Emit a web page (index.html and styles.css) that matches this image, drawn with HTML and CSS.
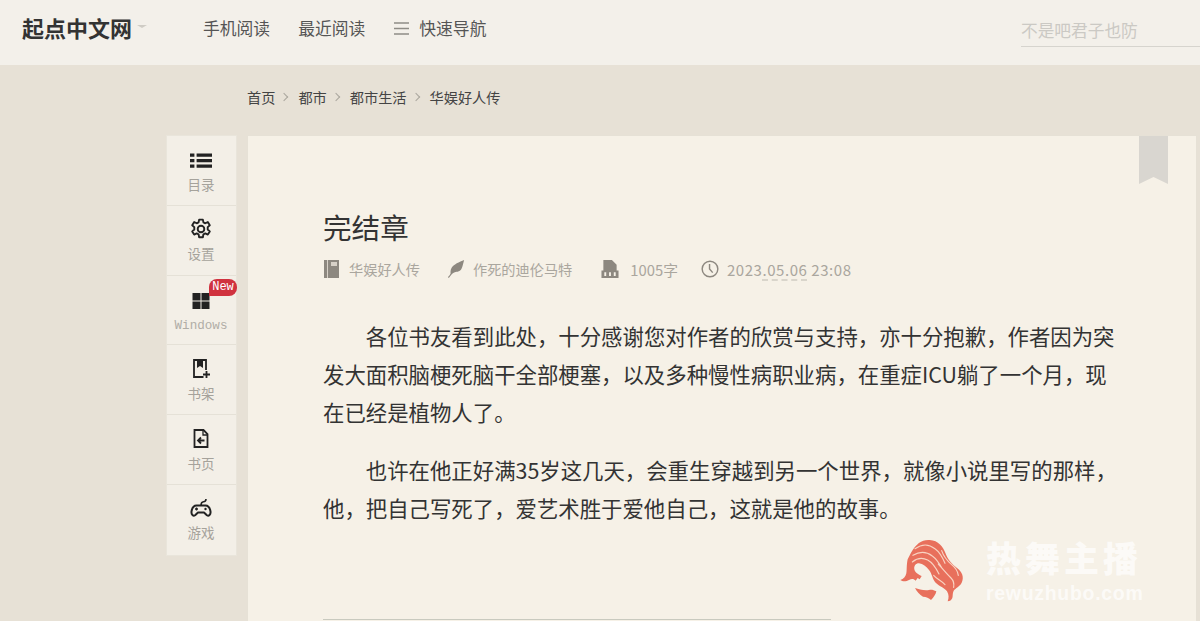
FILE: index.html
```html
<!DOCTYPE html>
<html lang="zh-CN">
<head>
  <meta charset="UTF-8">
  <title>完结章 - 华娱好人传</title>
  <link rel="stylesheet" href="styles.css">
</head>
<body>
  <header class="topbar">
    <a class="logo">起点中文网</a>
    <span class="logo-caret"></span>
    <nav class="topnav">
      <a>手机阅读</a>
      <a>最近阅读</a>
      <a class="nav-guide">
        <svg class="nav-icon" viewBox="0 0 15 13"><path d="M0 1h15M0 6.500h15M0 12h15" stroke="#8e8c86" stroke-width="1.500" fill="none"/></svg>
        快速导航
      </a>
    </nav>
    <div class="search">不是吧君子也防</div>
  </header>

  <div class="crumbs">
    <a>首页</a><span class="sep"></span>
    <a>都市</a><span class="sep"></span>
    <a>都市生活</a><span class="sep"></span>
    <a>华娱好人传</a>
  </div>

  <main class="reader">
    <ul class="sidebar">
      <li class="side-item">
        <svg class="side-icon side-icon-wide" viewBox="0 0 20 20"><path d="M0 4h4v3H0zM6 4h14v3H6zM0 9h4v3H0zM6 9h14v3H6zM0 14h4v3H0zM6 14h14v3H6z" fill="#222"/></svg>
        <span>目录</span>
      </li>
      <li class="side-item">
        <svg class="side-icon side-icon-wide" viewBox="0 0 20 20"><g fill="none" stroke="#222" stroke-width="1.700"><circle cx="10" cy="10" r="3"/><path d="M8.300 1.500h3.400l.5 2.500 1.700.8 2.300-1.100 1.800 2.900-1.900 1.700v2.200l1.900 1.700-1.800 2.900-2.300-1.100-1.700.8-.5 2.700H8.300l-.5-2.700-1.700-.8-2.300 1.100-1.800-2.900 1.900-1.700V8.300L2 6.600l1.800-2.900 2.300 1.100 1.700-.8z" stroke-linejoin="round"/></g></svg>
        <span>设置</span>
      </li>
      <li class="side-item side-windows">
        <svg class="side-icon" viewBox="0 0 20 20"><path d="M1.500 2h8v7.500h-8zM10.500 2h8v7.500h-8zM1.500 10.500h8V18h-8zM10.500 10.500h8V18h-8z" fill="#222"/></svg>
        <span class="mono">Windows</span>
        <em class="badge">New</em>
      </li>
      <li class="side-item">
        <svg class="side-icon" viewBox="0 0 20 20"><path d="M12.500 18H3V1h12v10" fill="none" stroke="#222" stroke-width="1.800"/><path d="M6 1h6v8L9 7 6 9z" fill="#222"/><path d="M12 15.500h7M15.500 12v7" stroke="#222" stroke-width="1.800"/></svg>
        <span>书架</span>
      </li>
      <li class="side-item">
        <svg class="side-icon" viewBox="0 0 20 20"><path d="M3.500 1h9l4 4v13h-13z" fill="none" stroke="#222" stroke-width="1.800"/><path d="M12 1v5h4.500" fill="none" stroke="#222" stroke-width="1.300"/><path d="M13.500 11.500H7M10 8.500l-3 3 3 3" fill="none" stroke="#222" stroke-width="1.800"/></svg>
        <span>书页</span>
      </li>
      <li class="side-item">
        <svg class="side-icon side-icon-wide" viewBox="0 0 22 20"><path d="M6.500 7.500h9c3 0 4.500 3 5 6 .4 3.300-1.800 5-3.600 3.700L14 14.500H8l-2.900 2.700C3.300 18.500 1.100 16.800 1.500 13.500c.5-3 2-6 5-6z" fill="none" stroke="#222" stroke-width="2" stroke-linejoin="round"/><path d="M11 7.500c0-3 1-3.500 2.500-3.700S16 3 16 1" fill="none" stroke="#222" stroke-width="1.600"/><path d="M5 11h3M6.500 9.500v3" stroke="#222" stroke-width="1.300"/><circle cx="15.500" cy="11" r="1.200" fill="#222"/></svg>
        <span>游戏</span>
      </li>
    </ul>

    <article class="chapter">
      <svg class="bookmark" viewBox="0 0 29 48"><path d="M0 0h29v48l-14.500-7L0 48z" fill="#d9d6d0"/></svg>
      <h1 class="chapter-title">完结章</h1>
      <div class="chapter-meta">
        <span class="meta-item">
          <svg class="meta-icon" viewBox="0 0 18 18"><path d="M1 0h15v18H1z" fill="#8d8880"/><path d="M4 0h1v18H4zM8 2h6v4H8z" fill="#f6f1e7" opacity=".7"/></svg>
          华娱好人传
        </span>
        <span class="meta-item">
          <svg class="meta-icon" viewBox="0 0 20 20"><path d="M1 19c1-1 2-2 3-4 0-1-.5-3 1-6 2-4 9-7 14-9-1 4-1.500 7-3 10-2 3-4 3-5 3-2 .5-4 1-6 3L2 20z" fill="#8d8880"/></svg>
          作死的迪伦马特
        </span>
        <span class="meta-item meta-count">
          <svg class="meta-icon" viewBox="0 0 18 19"><path d="M2 0h9l5 5v6H2zM0 11h18v8H0z" fill="#8d8880"/><path d="M3 13h2v4H3zM8 13h2v4H8zM13 13h2v4h-2z" fill="#f6f1e7"/></svg>
          1005字
        </span>
        <span class="meta-item">
          <svg class="meta-icon" viewBox="0 0 20 20"><circle cx="10" cy="10" r="8.700" fill="none" stroke="#8d8880" stroke-width="1.600"/><path d="M9.500 4.500V10l3.500 4" fill="none" stroke="#8d8880" stroke-width="1.600"/></svg>
          <span class="meta-date">2023<u>.05.06</u> 23:08</span>
        </span>
      </div>
      <div class="chapter-text">
        <p>各位书友看到此处，十分感谢您对作者的欣赏与支持，亦十分抱歉，作者因为突发大面积脑梗死脑干全部梗塞，以及多种慢性病职业病，在重症ICU躺了一个月，现在已经是植物人了。</p>
        <p>也许在他正好满35岁这几天，会重生穿越到另一个世界，就像小说里写的那样，他，把自己写死了，爱艺术胜于爱他自己，这就是他的故事。</p>
      </div>
      <div class="chapter-rule"></div>
    </article>
  </main>

  <div class="watermark">
    <svg class="wm-logo" viewBox="0 0 216 228">
      <path d="M36 62C52 34 70 22 92 24c26 2 40 18 50 46 6 14 14 24 32 38 16 12 22 28 14 44-6 12-18 16-24 24-4 8-2 16-4 22-2 6-8 10-14 10 4-10 4-20-2-30-8-12-22-14-34-26-10-10-10-26-20-38-8-10-18-18-30-20-10 0-16 8-14 18 2 10 12 16 22 20l-6 10-6-4-6 8c-6-6-12-6-20-2-8 4-18 6-26 0 10-2 16-10 18-20 2-12 0-22 4-42z" fill="#e8705c"/>
      <path d="M48 50c20-14 42-14 60 0 14 10 22 24 30 44M42 70c20-12 42-10 58 2 14 10 22 24 30 38M40 90c12-10 30-14 46-6 16 8 26 26 34 42M118 96c14 16 24 28 38 42 8 8 10 16 8 28M128 56c6 18 16 30 30 42 10 8 18 18 20 32M104 130c10 12 24 16 34 28" fill="none" stroke="#f9d3c2" stroke-width="3.500" stroke-linecap="round"/>
      <path d="M48 168c12 4 26 8 42 6 8-2 14 0 22 4-2 10-8 18-16 26-6-6-14-10-24-10-10-6-18-14-24-26z" fill="#e8705c"/>
    </svg>
    <div class="wm-text">
      <strong>热舞主播</strong>
      <span>rewuzhubo.com</span>
    </div>
  </div>
</body>
</html>
```

FILE: styles.css
```css
* {
  margin: 0;
  padding: 0;
  box-sizing: border-box;
}

html, body {
  height: 100%;
  overflow: hidden;
}

body {
  position: relative;
  background: #e7e1d6;
  color: #333;
  font-family: "Noto Sans CJK SC", "Noto Sans", sans-serif;
}

.topbar {
  display: flex;
  align-items: center;
  height: 65px;
  padding: 0 0 10px 22px;
  background: #f3f0ea;
}

.logo {
  font-size: 22px;
  font-weight: 700;
  color: #333;
  line-height: 1;
  margin-top: -2px;
}

.logo-caret {
  width: 0;
  height: 0;
  margin: -2px 0 0 5px;
  border-style: solid;
  border-color: #cfccc5 transparent transparent;
  border-width: 3px 5px 0;
}

.topnav {
  display: flex;
  align-items: center;
  gap: 28px;
  margin-left: 56px;
  font-size: 16.800px;
  color: #555;
}

.nav-guide {
  display: flex;
  align-items: center;
  gap: 10px;
}

.nav-icon {
  width: 15px;
  height: 13px;
  margin: 2px 0 0 1px;
}

.search {
  align-self: flex-start;
  width: 179px;
  height: 30px;
  margin: 17px 0 0 auto;
  border-bottom: 1px solid #d6d4ce;
  font-size: 16.700px;
  line-height: 27px;
  color: #cbc9c4;
}

.crumbs {
  display: flex;
  align-items: center;
  height: 70px;
  padding: 0 0 6px 247px;
  font-size: 14.200px;
  color: #444;
}

.sep {
  width: 6px;
  height: 6px;
  margin: 0 11px 0 6px;
  border-top: 1px solid #aaa69d;
  border-right: 1px solid #aaa69d;
  transform: rotate(45deg);
}

.reader {
  display: flex;
  align-items: flex-start;
  gap: 10px;
  height: calc(100vh - 135px);
  margin-left: 166px;
}

.sidebar {
  flex: none;
  width: 71px;
  list-style: none;
  background: #f3efe7;
  border: 1px solid #e9e5db;
}

.side-item {
  position: relative;
  display: flex;
  flex-direction: column;
  align-items: center;
  height: 69.800px;
  padding: 13.500px 1px 0 0;
  border-bottom: 1px solid #e5e1d7;
  font-size: 13.500px;
  line-height: 20px;
  color: #a5a29b;
}

.side-item:last-child {
  border-bottom: 0;
}

.side-icon {
  width: 20px;
  height: 20px;
  margin-bottom: 4px;
}

.side-icon-wide {
  width: 22px;
  height: 22px;
  margin: -1px 0 3px;
}

.side-windows .side-icon {
  margin: 1.500px 0 5px;
}

.mono {
  font-family: "Liberation Mono", monospace;
  font-size: 12.600px;
  color: #b0ada6;
}

.badge {
  position: absolute;
  top: 3px;
  right: -1px;
  width: 28px;
  height: 17px;
  border-radius: 8px 8px 8px 0;
  background: #d0323f;
  color: #fff;
  font-family: "Liberation Mono", monospace;
  font-size: 12px;
  font-style: normal;
  line-height: 16px;
  text-align: center;
}

.chapter {
  position: relative;
  flex: none;
  width: 950px;
  height: 100%;
  padding: 73px 75px 0;
  overflow: hidden;
  background: #f6f1e7;
  border: 1px solid #e6e1d6;
  border-bottom: 0;
}

.bookmark {
  position: absolute;
  top: 0;
  right: 28px;
  width: 29px;
  height: 48px;
}

.chapter-title {
  font-size: 28.600px;
  font-weight: 400;
  line-height: 36px;
  color: #333;
}

.chapter-meta {
  display: flex;
  align-items: center;
  margin-top: 12px;
  height: 24px;
  font-size: 14.200px;
  color: #aaa69e;
}

.meta-item {
  display: flex;
  align-items: center;
  margin-right: 27px;
}

.meta-icon {
  width: 18px;
  height: 18px;
  margin-right: 8px;
}

.meta-count {
  margin-left: 2px;
  margin-right: 23px;
  font-size: 14.800px;
}

.meta-count .meta-icon {
  margin-right: 11px;
}

.meta-date {
  font-size: 15px;
  letter-spacing: .55px;
}

.meta-date u {
  text-decoration: underline dashed #cfcbc2;
  text-underline-offset: 4px;
}

.chapter-text {
  width: 800px;
  margin-top: 36px;
  font-size: 21.400px;
  line-height: 38.200px;
  color: #333;
}

.chapter-text p {
  text-indent: 2em;
  margin-bottom: 19.500px;
}

.chapter-rule {
  width: 508px;
  height: 1px;
  margin-top: 91px;
  background: #c9cabf;
}

.watermark {
  position: absolute;
  left: 899px;
  top: 532px;
  display: flex;
  align-items: flex-start;
  gap: 15px;
}

.wm-logo {
  flex: none;
  width: 72px;
  height: 76px;
}

.wm-text {
  display: flex;
  flex-direction: column;
  color: #fff;
  opacity: .7;
}

.wm-text strong {
  font-size: 35px;
  line-height: 50px;
  letter-spacing: 4px;
  font-weight: 900;
}

.wm-text span {
  font-family: "Liberation Sans", sans-serif;
  font-size: 19.500px;
  font-weight: 700;
  line-height: 22px;
  letter-spacing: .7px;
}
```
